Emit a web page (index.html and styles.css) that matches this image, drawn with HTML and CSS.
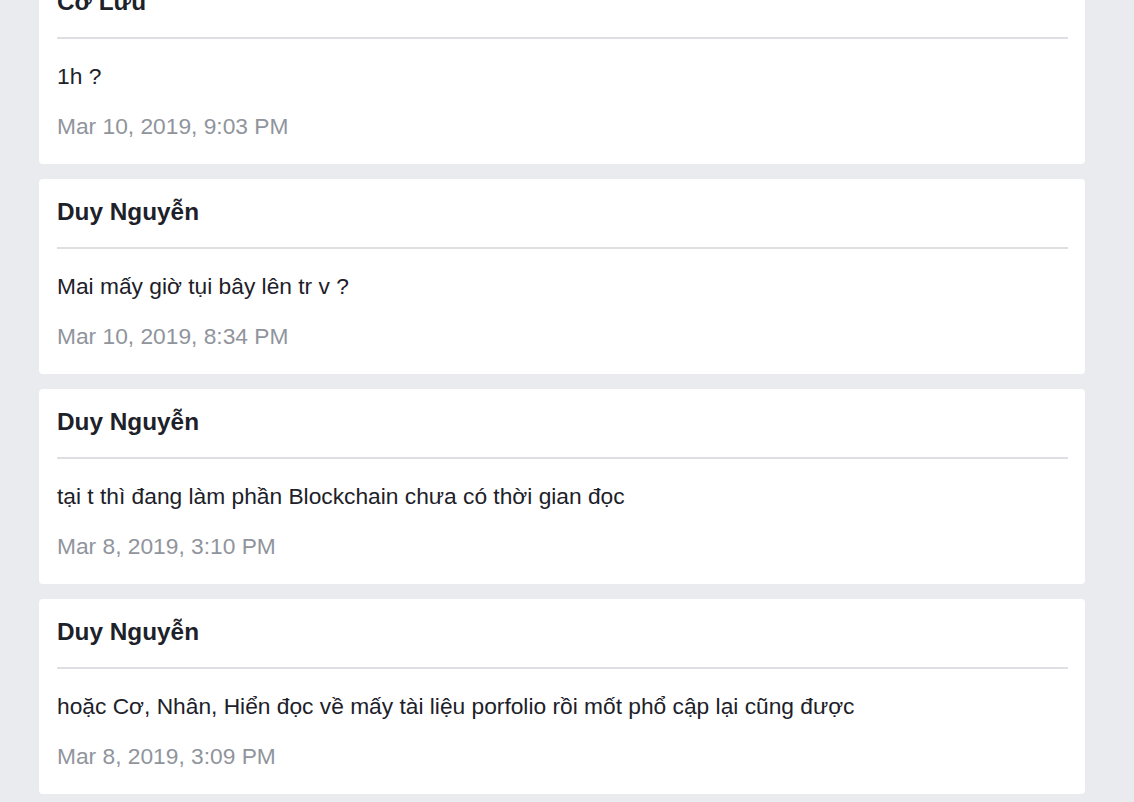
FILE: index.html
```html
<!DOCTYPE html>
<html lang="vi">
<head>
<meta charset="utf-8">
<title>Messages</title>
<link rel="stylesheet" href="styles.css">
</head>
<body>
<div class="list">
  <div class="card">
    <div class="name">Cơ Lưu</div>
    <div class="msg">1h ?</div>
    <div class="date">Mar 10, 2019, 9:03 PM</div>
  </div>
  <div class="card">
    <div class="name">Duy Nguyễn</div>
    <div class="msg">Mai mấy giờ tụi bây lên tr v ?</div>
    <div class="date">Mar 10, 2019, 8:34 PM</div>
  </div>
  <div class="card">
    <div class="name">Duy Nguyễn</div>
    <div class="msg">tại t thì đang làm phần Blockchain chưa có thời gian đọc</div>
    <div class="date">Mar 8, 2019, 3:10 PM</div>
  </div>
  <div class="card">
    <div class="name">Duy Nguyễn</div>
    <div class="msg">hoặc Cơ, Nhân, Hiển đọc về mấy tài liệu porfolio rồi mốt phổ cập lại cũng được</div>
    <div class="date">Mar 8, 2019, 3:09 PM</div>
  </div>
</div>
</body>
</html>
```
FILE: styles.css
```css
html, body {
  margin: 0;
  padding: 0;
  background: #e9ebee;
  font-family: "Liberation Sans", Arial, sans-serif;
  color: #1d2129;
}
.list {
  display: flex;
  flex-direction: column;
  gap: 15px;
  width: 1046px;
  margin: -31px 0 0 39px;
}
.card {
  background: #fff;
  border-radius: 4px;
  height: 195px;
  box-sizing: border-box;
  padding: 19px 17px 0 18px;
}
.name {
  font-size: 24.35px;
  font-weight: bold;
  line-height: 28px;
  padding-bottom: 21px;
  border-bottom: 2px solid #dddfe2;
}
.msg {
  font-size: 22.76px;
  line-height: 27px;
  margin-top: 24px;
}
.date {
  font-size: 22.76px;
  line-height: 27px;
  margin-top: 23px;
  color: #90949c;
}
```
